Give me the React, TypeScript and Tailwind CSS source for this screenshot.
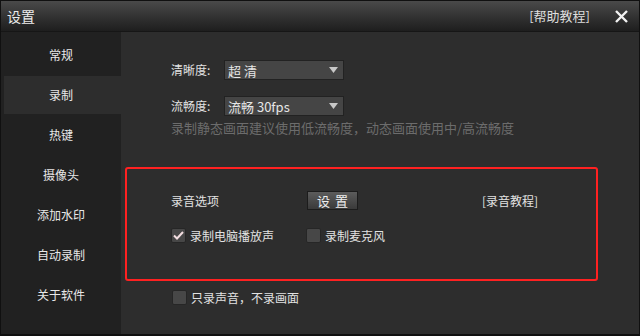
const font = { fontFamily: '"Noto Sans CJK SC", "Noto Sans", sans-serif' };

const menu = ["常规", "录制", "热键", "摄像头", "添加水印", "自动录制", "关于软件"];

function Arrow() {
  return (
    <svg width="9" height="6" viewBox="0 0 9 6">
      <path d="M0 0 H9 L4.5 6 Z" fill="#c8c8c8" />
    </svg>
  );
}

function Select({ value }: { value: string }) {
  return (
    <div className="flex h-[20px] w-[120px] items-center justify-between border border-[#222] bg-[#454545] pl-[3px] pr-[5px]">
      <span className="text-[13px] leading-none text-[#e6e6e6]">{value}</span>
      <Arrow />
    </div>
  );
}

function Check({ checked, label }: { checked?: boolean; label: string }) {
  return (
    <div className="flex items-center gap-[4px]">
      <div className="flex h-[15px] w-[15px] items-center justify-center rounded-[2px] border border-[#262626] bg-[#474747]">
        {checked ? (
          <svg width="11" height="9" viewBox="0 0 11 9">
            <path d="M1 4.5 L4 7.5 L10 1" fill="none" stroke="#f2dde0" strokeWidth="2" />
          </svg>
        ) : null}
      </div>
      <span className="text-[12px] leading-none text-[#e2e2e2]">{label}</span>
    </div>
  );
}

export default function App() {
  return (
    <div
      className="flex h-[336px] w-[640px] flex-col border border-b-2 border-[#101010] bg-[#2d2d2d]"
      style={font}
    >
      {/* title bar */}
      <div className="flex h-[31px] items-center justify-between border-b border-[#161616] bg-gradient-to-b from-[#4a4a4a] to-[#1e1e1e] pl-[6px] pr-[11px]">
        <span className="text-[14px] text-[#ececec]">设置</span>
        <div className="flex items-center gap-[25px]">
          <span className="text-[13px] text-[#dedede]">[帮助教程]</span>
          <svg width="13" height="13" viewBox="0 0 13 13">
            <path d="M1 1 L12 12 M12 1 L1 12" stroke="#f2f2f2" strokeWidth="2.4" />
          </svg>
        </div>
      </div>

      <div className="flex flex-1">
        {/* sidebar */}
        <div className="flex w-[120px] flex-col gap-[2px] bg-[#212121] pt-[4px]">
          {menu.map((item) => (
            <div
              key={item}
              className={`ml-[3px] flex h-[38px] items-center justify-center text-[12px] text-[#e8e8e8] ${
                item === "录制" ? "bg-[#2d2d2d]" : ""
              }`}
            >
              <span className="-ml-[3px]">{item}</span>
            </div>
          ))}
        </div>

        {/* content */}
        <div className="flex flex-1 flex-col pt-[28px]">
          <div className="flex items-center pl-[50px]">
            <span className="w-[53px] text-[12px] text-[#e2e2e2]">清晰度:</span>
            <Select value="超 清" />
          </div>
          <div className="mt-[16px] flex items-center pl-[50px]">
            <span className="w-[53px] text-[12px] text-[#e2e2e2]">流畅度:</span>
            <Select value="流畅 30fps" />
          </div>
          <div className="mt-[3px] pl-[50px] text-[13px] leading-[18px] text-[#6c6c6c]">
            录制静态画面建议使用低流畅度，动态画面使用中/高流畅度
          </div>

          <div className="ml-[4px] mt-[30px] h-[114px] w-[473px] rounded-[3px] border-2 border-[#ff2121] pl-[44px] pt-[22px]">
            <div className="flex items-center">
              <span className="w-[136px] text-[12px] text-[#e2e2e2]">录音选项</span>
              <div className="flex h-[19px] w-[51px] items-center justify-center border border-[#1c1c1c] bg-gradient-to-b from-[#5c5c5c] to-[#3a3a3a] text-[13px] tracking-[5px] text-[#eeeeee]">
                <span className="ml-[5px]">设置</span>
              </div>
              <span className="ml-[124px] text-[12px] text-[#e2e2e2]">[录音教程]</span>
            </div>
            <div className="mt-[18px] flex items-center">
              <div className="w-[135px]">
                <Check checked label="录制电脑播放声" />
              </div>
              <Check label="录制麦克风" />
            </div>
          </div>

          <div className="mt-[9px] pl-[51px]">
            <Check label="只录声音，不录画面" />
          </div>
        </div>
      </div>
    </div>
  );
}
